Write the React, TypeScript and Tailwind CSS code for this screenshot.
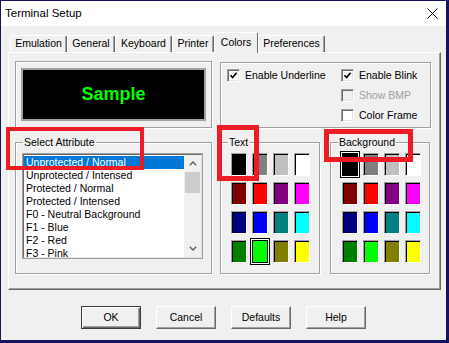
import React from 'react';

const TABS = [
  { label: 'Emulation', w: 'w-[57px]' },
  { label: 'General', w: 'w-[48px]' },
  { label: 'Keyboard', w: 'w-[57px]' },
  { label: 'Printer', w: 'w-[42px]' },
  { label: 'Colors', w: 'w-[44px]', active: true },
  { label: 'Preferences', w: 'w-[67px]' },
];

const ATTRIBUTES = [
  'Unprotected / Normal',
  'Unprotected / Intensed',
  'Protected / Normal',
  'Protected / Intensed',
  'F0 - Neutral Background',
  'F1 - Blue',
  'F2 - Red',
  'F3 - Pink',
];

const SWATCHES = [
  'bg-[#000000]', 'bg-[#808080]', 'bg-[#c0c0c0]', 'bg-[#ffffff]',
  'bg-[#800000]', 'bg-[#ff0000]', 'bg-[#800080]', 'bg-[#ff00ff]',
  'bg-[#000080]', 'bg-[#0000ff]', 'bg-[#008080]', 'bg-[#00ffff]',
  'bg-[#008000]', 'bg-[#00ff00]', 'bg-[#808000]', 'bg-[#ffff00]',
];

function Group({ label, className, children }: { label?: string; className?: string; children?: React.ReactNode }) {
  return (
    <div className={`relative border border-[#a0a0a0] shadow-[inset_1px_1px_0_#fff,1px_1px_0_#fff] ${className ?? ''}`}>
      {label && (
        <span className="absolute -top-[7px] left-[7px] bg-[#f0f0f0] px-[1px] leading-[13px]">{label}</span>
      )}
      {children}
    </div>
  );
}

function Check({ label, checked, disabled }: { label: string; checked?: boolean; disabled?: boolean }) {
  return (
    <div className="flex items-center h-[13px]">
      <div
        className={`w-[13px] h-[13px] flex items-center justify-center border border-t-[#a0a0a0] border-l-[#a0a0a0] border-r-white border-b-white shadow-[inset_1px_1px_0_#696969,inset_-1px_-1px_0_#e3e3e3] ${
          disabled ? 'bg-[#f0f0f0]' : 'bg-white'
        }`}
      >
        {checked && (
          <svg width="9" height="9" viewBox="0 0 9 9">
            <path d="M1.5 4.2 L3.6 6.5 L7.6 1.8" fill="none" stroke="#000" strokeWidth="1.7" />
          </svg>
        )}
      </div>
      <span className={`ml-[5px] whitespace-nowrap ${disabled ? 'text-[#a0a0a0]' : ''}`}>{label}</span>
    </div>
  );
}

function Swatches({ selected }: { selected: number }) {
  return (
    <div className="grid grid-cols-[repeat(4,16px)] gap-x-[5px] gap-y-[6px]">
      {SWATCHES.map((bg, i) => (
        <div
          key={i}
          className={`w-[16px] h-[23px] ${bg} ${
            i === selected
              ? 'border border-black shadow-[0_0_0_1px_#fff,0_0_0_2px_#000]'
              : 'border border-t-[#a0a0a0] border-l-[#a0a0a0] border-r-white border-b-white shadow-[inset_1px_1px_0_#000]'
          }`}
        />
      ))}
    </div>
  );
}

function Chevron({ down }: { down?: boolean }) {
  return (
    <svg width="8" height="5" viewBox="0 0 8 5">
      <path d={down ? 'M0.8 0.8 L4 4 L7.2 0.8' : 'M0.8 4.2 L4 1 L7.2 4.2'} fill="none" stroke="#606060" strokeWidth="1.4" />
    </svg>
  );
}

function Button({ label, isDefault }: { label: string; isDefault?: boolean }) {
  return (
    <div
      className={`w-[60px] h-[23px] flex items-center justify-center bg-[#f0f0f0] border ${
        isDefault
          ? 'border-[#3c3c3c] shadow-[inset_1px_1px_0_#fff,inset_-1px_-1px_0_#696969,inset_-2px_-2px_0_#a0a0a0]'
          : 'border-t-white border-l-white border-r-[#696969] border-b-[#696969] shadow-[inset_-1px_-1px_0_#a0a0a0]'
      }`}
    >
      {label}
    </div>
  );
}

export default function App() {
  return (
    <div className="relative w-[449px] h-[343px] flex flex-col border-t border-l border-r-[3px] border-b-[3px] border-[#14145a] bg-[#f0f0f0] font-['Liberation_Sans',Arial,sans-serif] text-[10.5px] text-black overflow-hidden select-none">
      {/* Title bar */}
      <div className="h-[25px] shrink-0 bg-white flex items-center justify-between pl-[4px] pr-[8px]">
        <span className="text-[11.5px]">Terminal Setup</span>
        <svg width="11" height="11" viewBox="0 0 11 11">
          <path d="M0.5 0.5 L10.5 10.5 M10.5 0.5 L0.5 10.5" stroke="#000" strokeWidth="1" />
        </svg>
      </div>

      <div className="flex-1 flex flex-col pt-[6px] pl-[7px] pr-[5px]">
        {/* Tabs */}
        <div className="h-[20px] flex items-end pl-[2px]">
          {TABS.map((t) =>
            t.active ? (
              <div
                key={t.label}
                className={`${t.w} h-[21px] -mb-px relative z-10 bg-[#f0f0f0] flex items-center justify-center border-t border-l border-t-white border-l-white border-r border-r-[#696969] rounded-t-[2px]`}
              >
                {t.label}
              </div>
            ) : (
              <div
                key={t.label}
                className={`${t.w} h-[17px] flex items-center justify-center border-t border-l border-t-white border-l-white border-r border-r-[#696969] shadow-[inset_-1px_0_0_#a0a0a0] rounded-t-[2px]`}
              >
                {t.label}
              </div>
            )
          )}
        </div>

        {/* Tab panel */}
        <div className="h-[238px] flex gap-[8px] pl-[6px] pt-[8px] border border-t-white border-l-white border-r-[#696969] border-b-[#696969] shadow-[inset_-1px_-1px_0_#a0a0a0]">
          {/* Left column */}
          <div className="w-[197px] flex flex-col">
            <Group className="h-[67px] pl-[5px] pt-[6px]">
              <div className="w-[185px] h-[53px] bg-black border-2 border-[#a0a0a0] flex items-center justify-center">
                <span className="text-[18px] font-bold text-[#00ff00]">Sample</span>
              </div>
            </Group>
            <Group label="Select Attribute" className="mt-[14px] h-[132px] pl-[6px] pt-[10px]">
              <div className="w-[181px] h-[106px] border border-[#a0a0a0]">
                <div className="h-full flex bg-white border border-t-[#696969] border-l-[#696969] border-r-[#e3e3e3] border-b-[#e3e3e3] overflow-hidden">
                  <div className="flex-1 flex flex-col pt-px">
                    {ATTRIBUTES.map((a, i) => (
                      <div
                        key={a}
                        className={`h-[13px] shrink-0 leading-[13px] pl-[2px] whitespace-nowrap ${
                          i === 0 ? 'bg-[#0078d7] text-white' : ''
                        }`}
                      >
                        {a}
                      </div>
                    ))}
                  </div>
                  <div className="w-[17px] bg-[#f0f0f0] flex flex-col">
                    <div className="h-[17px] flex items-center justify-center">
                      <Chevron />
                    </div>
                    <div className="h-[21px] mx-px bg-[#cdcdcd]" />
                    <div className="flex-1" />
                    <div className="h-[17px] flex items-center justify-center">
                      <Chevron down />
                    </div>
                  </div>
                </div>
              </div>
            </Group>
          </div>

          {/* Right column */}
          <div className="w-[211px] flex flex-col pt-px">
            <Group className="h-[66px] pl-[6px] pt-[6px]">
              <div className="grid grid-cols-[114px_1fr] gap-y-[7px]">
                <Check label="Enable Underline" checked />
                <Check label="Enable Blink" checked />
                <div />
                <Check label="Show BMP" disabled />
                <div />
                <Check label="Color Frame" />
              </div>
            </Group>
            <div className="mt-[14px] flex gap-[10px]">
              <Group label="Text" className="w-[100px] h-[132px] pl-[10px] pt-[10px]">
                <Swatches selected={13} />
              </Group>
              <Group label="Background" className="w-[100px] h-[132px] pl-[11px] pt-[10px]">
                <Swatches selected={0} />
              </Group>
            </div>
          </div>
        </div>

        {/* Buttons */}
        <div className="mt-[16px] flex justify-center gap-[15px] pr-[2px]">
          <Button label="OK" isDefault />
          <Button label="Cancel" />
          <Button label="Defaults" />
          <Button label="Help" />
        </div>
      </div>

      {/* Red annotation boxes */}
      <div className="absolute left-[5px] top-[126px] w-[138px] h-[43px] border-4 border-[#ed1c24]" />
      <div className="absolute left-[216px] top-[124px] w-[42px] h-[56px] border-[5px] border-[#ed1c24]" />
      <div className="absolute left-[323px] top-[128px] w-[89px] h-[33px] border-[5px] border-[#ed1c24]" />
    </div>
  );
}
